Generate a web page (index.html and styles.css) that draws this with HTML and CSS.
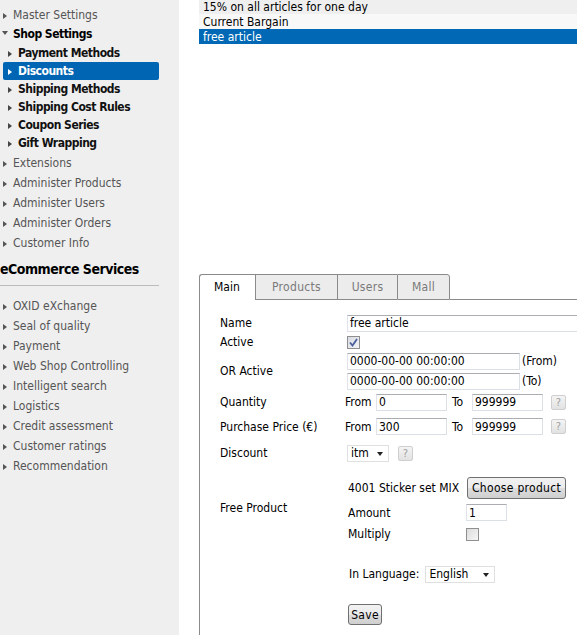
FILE: index.html
```html
<!DOCTYPE html>
<html>
<head>
<meta charset="utf-8">
<title>Discounts</title>
<link rel="stylesheet" href="styles.css">
</head>
<body>
<div class="page">
  <nav class="sidebar">
    <ul class="menu">
      <li class="top">Master Settings</li>
      <li class="top open">Shop Settings</li>
      <li class="sub">Payment Methods</li>
      <li class="sub active">Discounts</li>
      <li class="sub">Shipping Methods</li>
      <li class="sub">Shipping Cost Rules</li>
      <li class="sub">Coupon Series</li>
      <li class="sub">Gift Wrapping</li>
      <li class="top first-after">Extensions</li>
      <li class="top">Administer Products</li>
      <li class="top">Administer Users</li>
      <li class="top">Administer Orders</li>
      <li class="top">Customer Info</li>
    </ul>
    <h2 class="services-title">eCommerce Services</h2>
    <ul class="menu services">
      <li class="top">OXID eXchange</li>
      <li class="top">Seal of quality</li>
      <li class="top">Payment</li>
      <li class="top">Web Shop Controlling</li>
      <li class="top">Intelligent search</li>
      <li class="top">Logistics</li>
      <li class="top">Credit assessment</li>
      <li class="top">Customer ratings</li>
      <li class="top">Recommendation</li>
    </ul>
  </nav>

  <main class="content">
    <div class="list">
      <div class="list-row odd">15% on all articles for one day</div>
      <div class="list-row even">Current Bargain</div>
      <div class="list-row selected">free article</div>
    </div>

    <div class="tabs">
      <div class="tab tab-active">Main</div>
      <div class="tab">Products</div>
      <div class="tab">Users</div>
      <div class="tab tab-last">Mall</div>
      <div class="tab-fill"></div>
    </div>

    <div class="panel">
      <div class="form">
        <div class="label r-name">Name</div>
        <div class="value r-name"><input class="field field-name" type="text" value="free article"></div>

        <div class="label r-active">Active</div>
        <div class="value r-active">
          <span class="checkbox checked">
            <svg width="9" height="9" viewBox="0 0 9 9"><path d="M1 4.5 L3.5 7.5 L8 1" fill="none" stroke="#4a5f9c" stroke-width="1.8"/></svg>
          </span>
        </div>

        <div class="label r-or">OR Active</div>
        <div class="value r-or stack">
          <div class="line"><input class="field field-date" type="text" value="0000-00-00 00:00:00"><span class="hint">(From)</span></div>
          <div class="line"><input class="field field-date" type="text" value="0000-00-00 00:00:00"><span class="hint">(To)</span></div>
        </div>

        <div class="label r-qty">Quantity</div>
        <div class="value r-qty line">
          <span class="from">From</span><input class="field field-range" type="text" value="0">
          <span class="to">To</span><input class="field field-range" type="text" value="999999">
          <span class="help">?</span>
        </div>

        <div class="label r-price">Purchase Price (€)</div>
        <div class="value r-price line">
          <span class="from">From</span><input class="field field-range" type="text" value="300">
          <span class="to">To</span><input class="field field-range" type="text" value="999999">
          <span class="help">?</span>
        </div>

        <div class="label r-disc">Discount</div>
        <div class="value r-disc line">
          <span class="select select-small">itm<i class="caret"></i></span>
          <span class="help help-disc">?</span>
        </div>

        <div class="label r-free">Free Product</div>
        <div class="value r-free">
          <div class="free-grid">
            <div class="fg-a">4001 Sticker set MIX</div>
            <div class="fg-b"><button class="btn btn-choose" type="button">Choose product</button></div>
            <div class="fg-a">Amount</div>
            <div class="fg-b"><input class="field field-amount" type="text" value="1"></div>
            <div class="fg-a">Multiply</div>
            <div class="fg-b"><span class="checkbox"></span></div>
          </div>
        </div>

        <div class="label r-lang"></div>
        <div class="value r-lang line">
          <span class="lang-label">In Language:</span>
          <span class="select select-lang">English<i class="caret"></i></span>
        </div>

        <div class="label r-save"></div>
        <div class="value r-save"><button class="btn btn-save" type="button">Save</button></div>
      </div>
    </div>
  </main>
</div>
</body>
</html>
```

FILE: styles.css
```css
* { box-sizing: border-box; }
html, body { margin: 0; padding: 0; }
body {
  font-family: "DejaVu Sans Condensed", "DejaVu Sans", sans-serif;
  font-size: 12px;
  color: #000;
  background: #fff;
  overflow: hidden;
}
.page {
  display: flex;
  height: 635px;
}

/* ---------- sidebar ---------- */
.sidebar {
  width: 179px;
  flex: none;
  background: #efefef;
  padding-top: 5px;
  overflow: hidden;
}
.menu {
  list-style: none;
  margin: 0;
  padding: 0;
}
.top {
  height: 20px;
  line-height: 20px;
  padding-left: 3px;
  color: #555;
  white-space: nowrap;
}
.top::before {
  content: "";
  display: inline-block;
  vertical-align: 0;
  border-left: 4px solid #555;
  border-top: 3.5px solid transparent;
  border-bottom: 3.5px solid transparent;
  margin-right: 6px;
}
.top.open {
  height: 19px;
  line-height: 19px;
  color: #000;
  font-weight: bold;
  letter-spacing: -0.5px;
  padding-left: 2px;
}
.top.open::before {
  border-left: 3.5px solid transparent;
  border-right: 3.5px solid transparent;
  border-top: 4px solid #555;
  border-bottom: 0;
  vertical-align: 3px;
  margin-right: 5px;
}
.first-after { margin-top: 1px; }
.sub {
  height: 18px;
  line-height: 18px;
  margin-left: 3px;
  margin-right: 20px;
  padding-left: 5px;
  border-radius: 2px;
  font-weight: bold;
  letter-spacing: -0.5px;
  color: #111;
  white-space: nowrap;
}
.sub::before {
  content: "";
  display: inline-block;
  vertical-align: 0;
  border-left: 4px solid #444;
  border-top: 3.5px solid transparent;
  border-bottom: 3.5px solid transparent;
  margin-right: 6px;
}
.sub.active {
  background: #0066b3;
  color: #fff;
}
.sub.active::before { border-left-color: #fff; }

.services-title {
  margin: 7px 20px 0 0;
  height: 26px;
  line-height: 18px;
  font-size: 14px;
  font-weight: bold;
  letter-spacing: -0.5px;
  border-bottom: 1px solid #bcbcbc;
  white-space: nowrap;
}
.services { padding-top: 10px; }

/* ---------- content ---------- */
.content {
  flex: 1;
  min-width: 0;
  padding-left: 20px;
  display: flex;
  flex-direction: column;
}
.list { margin-top: -1px; }
.list-row {
  height: 15px;
  line-height: 16px;
  padding-left: 4px;
  white-space: nowrap;
}
.list-row.odd { background: #efefef; }
.list-row.even { background: #f8f8f8; }
.list-row.selected { background: #0068b4; color: #fff; }

.tabs {
  display: flex;
  margin-top: 230px;
  height: 26px;
}
.tab {
  height: 26px;
  line-height: 24px;
  border-top: 1px solid #8a8a8a;
  border-left: 1px solid #8a8a8a;
  border-bottom: 1px solid #8a8a8a;
  background: #ececec;
  color: #7a7a7a;
  text-align: center;
  letter-spacing: 0.3px;
}
.tab:nth-child(2) { width: 82px; }
.tab:nth-child(3) { width: 60px; }
.tab-active {
  width: 56px;
  background: #fff;
  color: #000;
  text-align: left;
  padding-left: 14px;
  border-bottom: 0;
  border-top-left-radius: 3px;
  letter-spacing: 0;
}
.tab-last {
  width: 53px;
  border-right: 1px solid #8a8a8a;
  border-top-right-radius: 3px;
}
.tab-fill {
  flex: 1;
  border-bottom: 1px solid #8a8a8a;
}

.panel {
  flex: 1;
  border-left: 1px solid #8a8a8a;
  padding: 13px 0 0 20px;
}

.form {
  display: grid;
  grid-template-columns: 127px 1fr;
  grid-template-rows: 20px 18px 40px 22px 27px 26px 97px 22px auto;
  align-items: center;
}
.label { white-space: nowrap; }
.value { white-space: nowrap; min-width: 0; }
.line { display: flex; align-items: center; }
.stack { display: flex; flex-direction: column; gap: 3px; }

.field {
  height: 17px;
  border: 1px solid #dbdfe6;
  border-top-color: #abadb3;
  border-left-color: #e2e3ea;
  padding: 0 2px;
  font: inherit;
  font-size: 12px;
  color: #000;
  background: #fff;
  outline: none;
}
.field-name { width: 240px; }
.field-date { width: 173px; }
.hint { margin-left: 2px; }
.field-range { width: 71px; }
.from { width: 31px; margin-left: -2px; }
.to { margin-left: 5px; width: 20px; }
.field-amount { width: 41px; }

.help {
  display: inline-block;
  width: 15px;
  height: 15px;
  margin-left: 8px;
  border: 1px solid #cfcfcf;
  border-radius: 2px;
  background: linear-gradient(#f4f4f4, #e2e2e2);
  color: #a0a0a0;
  font-size: 11px;
  line-height: 13px;
  text-align: center;
}
.help-disc { margin-left: 9px; }

.checkbox {
  display: inline-flex;
  align-items: center;
  justify-content: center;
  width: 13px;
  height: 13px;
  border: 1px solid #8f8f8f;
  background: linear-gradient(135deg, #dcdcdc, #f6f6f6);
  vertical-align: middle;
}
.checkbox.checked { background: linear-gradient(135deg, #d8dbe2, #f2f3f6); }

.select {
  display: inline-flex;
  align-items: center;
  height: 17px;
  border: 1px solid #e0e0e0;
  background: #fff;
  padding-left: 3px;
}
.select-small { width: 42px; }
.select-lang { width: 70px; margin-left: 6px; }
.caret {
  margin-left: auto;
  margin-right: 5px;
  border-left: 3.5px solid transparent;
  border-right: 3.5px solid transparent;
  border-top: 4px solid #222;
  margin-top: 2px;
}

.r-free { align-self: start; }
.label.r-free { margin-top: 35px; }
.free-grid {
  display: grid;
  grid-template-columns: 119px auto;
  grid-template-rows: 25px 25px 18px;
  align-items: center;
  padding-top: 9px;
}
.fg-a { padding-left: 1px; }

.btn {
  font: inherit;
  font-size: 12px;
  color: #000;
  border: 1px solid #707070;
  border-radius: 3px;
  background: linear-gradient(#f2f2f2 0%, #ebebeb 50%, #dddddd 51%, #cfcfcf 100%);
  padding: 0 4px;
  height: 22px;
  letter-spacing: 0.3px;
}
.btn-choose { margin-left: 1px; width: 99px; }
.btn-save { margin-left: 1px; width: 34px; height: 21px; padding: 0; }
.lang-label { margin-left: 2px; }
.r-save { align-self: start; padding-top: 19px; }
```
